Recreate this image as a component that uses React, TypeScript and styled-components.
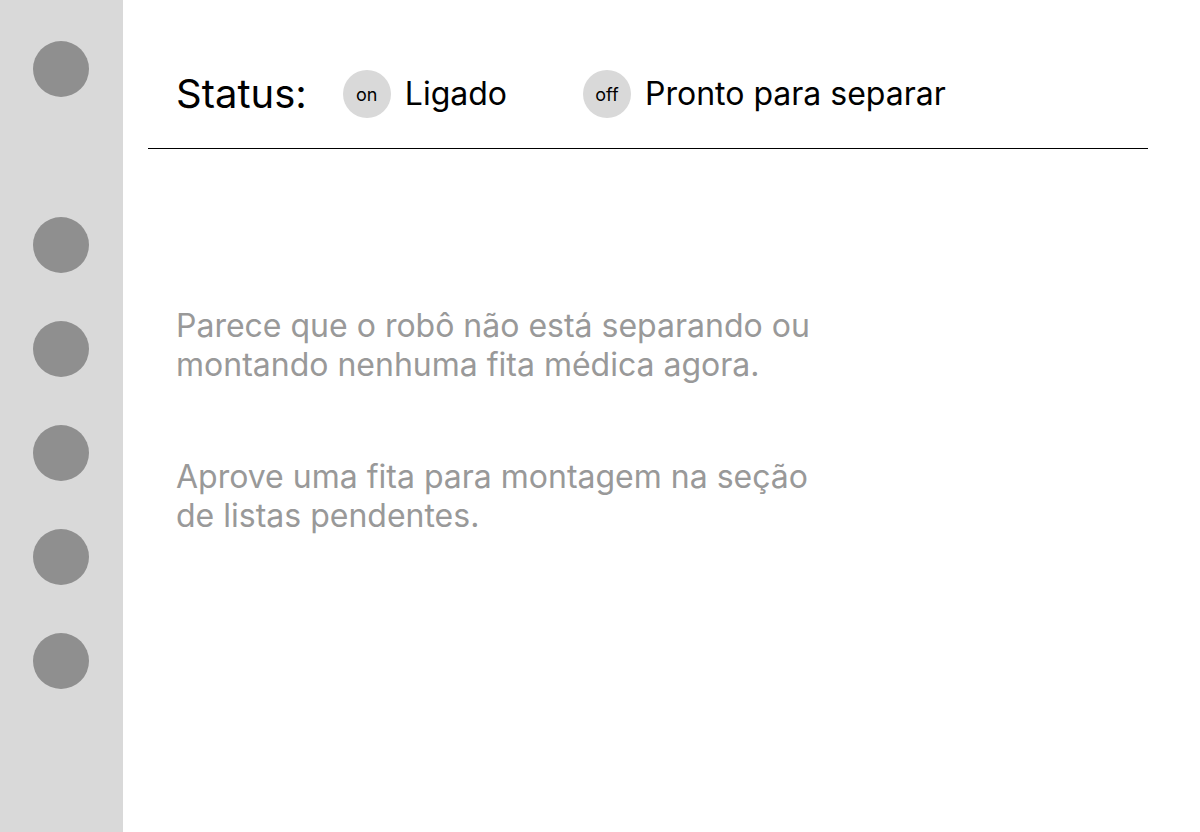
import React from "react";
import styled, { createGlobalStyle } from "styled-components";

const GlobalStyle = createGlobalStyle`
  html, body {
    margin: 0;
    padding: 0;
    background: #ffffff;
    font-family: Inter, "Noto Sans", sans-serif;
  }
`;

const Page = styled.div`
  display: flex;
  width: 1200px;
  height: 832px;
  overflow: hidden;
`;

const Sidebar = styled.nav`
  width: 123px;
  flex-shrink: 0;
  background: #d9d9d9;
  display: flex;
  flex-direction: column;
  align-items: center;
  padding-top: 41px;
  box-sizing: border-box;
`;

const NavDot = styled.div<{ $gapAfter: number }>`
  width: 56px;
  height: 56px;
  border-radius: 50%;
  background: #8f8f8f;
  margin-bottom: ${(p) => p.$gapAfter}px;
  margin-right: 2px;
`;

const Main = styled.main`
  flex: 1;
  padding: 0 52px 0 25px;
  display: flex;
  flex-direction: column;
`;

const Header = styled.header`
  display: flex;
  align-items: center;
  padding: 70px 0 30px 28px;
  border-bottom: 1px solid #000;
`;

const StatusLabel = styled.span`
  font-size: 40px;
  color: #000;
  line-height: 48px;
  margin-right: 36px;
`;

const StatusItem = styled.div<{ $gapAfter?: number }>`
  display: flex;
  align-items: center;
  gap: 14px;
  margin-right: ${(p) => p.$gapAfter ?? 0}px;
`;

const Badge = styled.span`
  width: 48px;
  height: 48px;
  border-radius: 50%;
  background: #d9d9d9;
  display: flex;
  align-items: center;
  justify-content: center;
  font-size: 18px;
  color: #000;
`;

const StatusText = styled.span`
  font-size: 32px;
  line-height: 48px;
  color: #000;
`;

const Body = styled.section`
  padding: 157px 0 0 28px;
  display: flex;
  flex-direction: column;
  gap: 73px;
`;

const Message = styled.p`
  margin: 0;
  max-width: 645px;
  font-size: 32px;
  line-height: 39px;
  color: #999999;
`;

export default function App() {
  const dots = [120, 48, 48, 48, 48, 0];
  return (
    <>
      <GlobalStyle />
      <Page>
        <Sidebar>
          {dots.map((g, i) => (
            <NavDot key={i} $gapAfter={g} />
          ))}
        </Sidebar>
        <Main>
          <Header>
            <StatusLabel>Status:</StatusLabel>
            <StatusItem $gapAfter={76}>
              <Badge>on</Badge>
              <StatusText>Ligado</StatusText>
            </StatusItem>
            <StatusItem>
              <Badge>off</Badge>
              <StatusText>Pronto para separar</StatusText>
            </StatusItem>
          </Header>
          <Body>
            <Message>
              Parece que o robô não está separando ou montando nenhuma fita
              médica agora.
            </Message>
            <Message>
              Aprove uma fita para montagem na seção de listas pendentes.
            </Message>
          </Body>
        </Main>
      </Page>
    </>
  );
}
